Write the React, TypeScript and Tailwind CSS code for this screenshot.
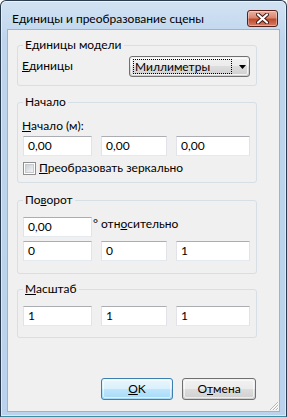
import clsx from "clsx";
import type { ReactNode } from "react";

function Field({ value, className }: { value: string; className?: string }) {
  return (
    <div
      className={clsx(
        "h-[20px] flex items-center pl-[4px] bg-white border border-[#e2e3ea] border-t-[#abadb3] border-b-[#e3e9ef]",
        className
      )}
    >
      {value}
    </div>
  );
}

function Row({ values, className }: { values: string[]; className?: string }) {
  return (
    <div className={clsx("flex", className)}>
      <Field value={values[0]} className="w-[69px]" />
      <Field value={values[1]} className="w-[66px] ml-[9px]" />
      <Field value={values[2]} className="flex-1 ml-[9px]" />
    </div>
  );
}

function Group({
  title,
  children,
  className,
}: {
  title: ReactNode;
  children: ReactNode;
  className?: string;
}) {
  return (
    <fieldset
      className={clsx(
        "w-[240px] border border-[#d5dfe5] rounded-[3px] pl-[5px] pr-[6px]",
        className
      )}
    >
      <legend className="px-[2px] leading-[16px]">{title}</legend>
      {children}
    </fieldset>
  );
}

function Combo() {
  return (
    <div className="ml-auto w-[121px] h-[21px] rounded-[3px] border border-[#707070] bg-[linear-gradient(#f2f2f2_0%,#ebebeb_50%,#dddddd_50%,#cfcfcf_100%)] p-[1px]">
      <div className="flex h-full items-center rounded-[2px] border border-white/70 pl-[1px]">
        <div className="flex h-[15px] w-[99px] items-center border border-dotted border-black pl-[1px]">
          Миллиметры
        </div>
        <svg width="7" height="4" viewBox="0 0 7 4" className="ml-[7px]">
          <path d="M0 0h7L3.5 4z" fill="#000" />
        </svg>
      </div>
    </div>
  );
}

function Button({
  children,
  primary,
  className,
}: {
  children: ReactNode;
  primary?: boolean;
  className?: string;
}) {
  return (
    <div
      className={clsx(
        "h-[22px] rounded-[3px] border p-[1px]",
        primary
          ? "border-[#3c7fb1] bg-[linear-gradient(#eaf6fd_0%,#d9f0fc_50%,#bee6fd_50%,#a7d9f5_100%)]"
          : "border-[#707070] bg-[linear-gradient(#f2f2f2_0%,#ebebeb_50%,#dddddd_50%,#cfcfcf_100%)]",
        className
      )}
    >
      <div className="flex h-full items-center justify-center rounded-[2px] border border-white/60">
        {children}
      </div>
    </div>
  );
}

export default function App() {
  return (
    <div className="w-[287px] h-[417px] bg-white font-['Lato','Roboto',sans-serif] text-[12px] leading-[16px] text-black">
      <div className="flex h-full w-full flex-col rounded-t-[6px] border border-[#2a3b4e] border-b-[#3b8fa3] bg-[linear-gradient(#d2e2f3,#bed5ed_40px,#bad2eb)] shadow-[inset_0_0_0_1px_rgba(255,255,255,0.5)]">
        {/* title bar */}
        <div className="flex h-[28px] shrink-0 items-start">
          <div className="pl-[11px] pt-[10px]">Единицы и преобразование сцены</div>
          <div className="ml-auto mr-[8px] mt-[9px] flex h-[17px] w-[31px] items-center justify-center rounded-[3px] border border-[#5a1f17] bg-[linear-gradient(#eab2a5_0%,#d98670_45%,#c2482c_55%,#d0806b_100%)] shadow-[inset_0_0_0_1px_rgba(255,255,255,0.35)]">
            <svg width="13" height="11" viewBox="0 0 13 11">
              <path d="M2 1.5l9 8M11 1.5l-9 8" stroke="#3b1510" strokeWidth="4" strokeLinecap="round" />
              <path d="M2 1.5l9 8M11 1.5l-9 8" stroke="#fff" strokeWidth="2.2" strokeLinecap="round" />
            </svg>
          </div>
        </div>

        {/* client area */}
        <div className="relative mx-[6px] mb-[4px] flex flex-1 flex-col border border-[#9db3cb] bg-[#f0f0f0] pl-[9px]">
          <Group title="Единицы модели" className="mt-[7px] pb-[8px]">
            <div className="mt-[3px] flex h-[21px] items-center">
              <span className="-ml-px -mt-[2px]">
                <span className="underline">Е</span>диницы
              </span>
              <Combo />
            </div>
          </Group>

          <Group title="Начало" className="mt-[8px] pb-[6px]">
            <div className="-ml-px mt-[8px]">
              <span className="underline">Н</span>ачало (м):
            </div>
            <Row values={["0,00", "0,00", "0,00"]} className="mt-[2px]" />
            <div className="mt-[4px] flex h-[16px] items-center">
              <div className="h-[13px] w-[13px] border border-[#8f8f8f] bg-white p-[1px]">
                <div className="h-full w-full border border-[#c6c9cf] bg-[linear-gradient(135deg,#cbcfd5,#f4f4f4)]" />
              </div>
              <span className="ml-[3px]">
                <span className="underline">П</span>реобразовать зеркально
              </span>
            </div>
          </Group>

          <Group
            title={
              <>
                По<span className="underline">в</span>орот
              </>
            }
            className="mt-[9px] pb-[12px]"
          >
            <div className="mt-[9px] flex items-start">
              <Field value="0,00" className="w-[69px]" />
              <span className="ml-px -mt-[1px]">
                ° отн<span className="underline">о</span>сительно
              </span>
            </div>
            <Row values={["0", "0", "1"]} className="mt-[4px]" />
          </Group>

          <Group
            title={
              <>
                <span className="underline">М</span>асштаб
              </>
            }
            className="mt-[7px] pb-[11px]"
          >
            <Row values={["1", "1", "1"]} className="mt-[9px]" />
          </Group>

          <div className="flex-1" />

          <div className="flex justify-end pb-[11px] pr-[23px]">
            <Button primary className="w-[72px]">
              <span>
                <span className="underline">O</span>K
              </span>
            </Button>
            <Button className="ml-[9px] w-[74px]">
              <span>
                О<span className="underline">т</span>мена
              </span>
            </Button>
          </div>

          {/* size grip */}
          <svg width="11" height="11" viewBox="0 0 11 11" className="absolute bottom-0 right-0">
            <path d="M10 2L2 10M10 5L5 10M10 8L8 10" stroke="#b5b5b5" strokeWidth="1" />
            <path d="M11 2L3 10M11 5L6 10M11 8L9 10" stroke="#ffffff" strokeWidth="1" />
          </svg>
        </div>
      </div>
    </div>
  );
}
